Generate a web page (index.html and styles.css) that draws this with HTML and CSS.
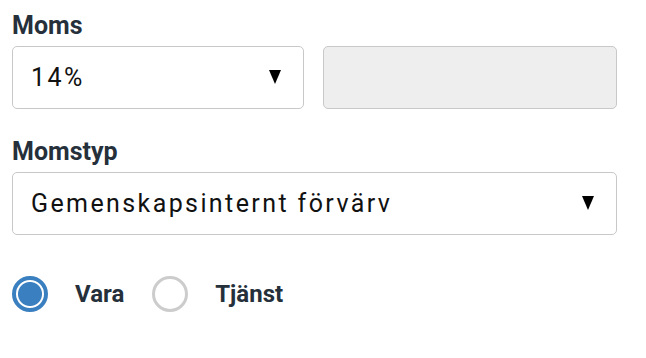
FILE: index.html
```html
<!DOCTYPE html>
<html lang="sv">
<head>
    <meta charset="UTF-8">
    <meta name="viewport" content="width=device-width, initial-scale=1.0">
    <title>Moms</title>
    <link rel="stylesheet" href="styles.css">
</head>
<body>
    <div class="form">
        <div class="field">
            <label class="label" for="moms">Moms</label>
            <div class="row">
                <div class="select">
                    <select id="moms">
                        <option>14%</option>
                        <option>25%</option>
                        <option>12%</option>
                        <option>6%</option>
                        <option>0%</option>
                    </select>
                    <svg class="arrow" width="12" height="14" viewBox="0 0 12 14"><polygon points="0,0 12,0 6,14" fill="#000"/></svg>
                </div>
                <input type="text" class="input" disabled>
            </div>
        </div>
        <div class="field">
            <label class="label" for="momstyp">Momstyp</label>
            <div class="select">
                <select id="momstyp">
                    <option>Gemenskapsinternt förvärv</option>
                </select>
                <svg class="arrow" width="12" height="14" viewBox="0 0 12 14"><polygon points="0,0 12,0 6,14" fill="#000"/></svg>
            </div>
        </div>
        <div class="radios">
            <label class="radio">
                <input type="radio" name="typ" checked>
                <span>Vara</span>
            </label>
            <label class="radio">
                <input type="radio" name="typ">
                <span>Tjänst</span>
            </label>
        </div>
    </div>
</body>
</html>
```

FILE: styles.css
```css
body {
    margin: 0;
    background-color: white;
    font-family: Roboto, Arial, sans-serif;
}
.form {
    width: 605px;
    padding: 12px 0 0 12px;
}
.field {
    margin-bottom: 29px;
}
.label {
    display: block;
    font-size: 25px;
    line-height: 28px;
    font-weight: 700;
    color: #25303b;
    margin-bottom: 6px;
}
.row {
    display: flex;
    gap: 19px;
}
.select {
    position: relative;
    flex: 1;
    min-width: 0;
}
.select select {
    appearance: none;
    -webkit-appearance: none;
    display: block;
    width: 100%;
    height: 63px;
    padding: 0 50px 0 18px;
    border: 1px solid #c8c8c8;
    border-radius: 5px;
    background-color: white;
    font-family: Roboto, Arial, sans-serif;
    font-size: 25px;
    letter-spacing: 2.4px;
    color: #111;
    box-sizing: border-box;
}
.arrow {
    position: absolute;
    right: 23px;
    top: 24px;
    pointer-events: none;
}
.input {
    flex: 1;
    width: 0;
    min-width: 0;
    height: 63px;
    padding: 0;
    border: 1px solid #c8c8c8;
    border-radius: 5px;
    background-color: #eeeeee;
    box-sizing: border-box;
    margin: 0;
}
.radios {
    display: flex;
    align-items: center;
    gap: 28px;
    margin-top: 41px;
}
.radio {
    display: flex;
    align-items: center;
    gap: 27px;
    font-size: 24px;
    font-weight: 700;
    color: #25303b;
}
.radio input {
    appearance: none;
    -webkit-appearance: none;
    width: 36px;
    height: 36px;
    margin: 0;
    border: 3px solid #cccccc;
    border-radius: 50%;
    background: white;
    box-sizing: border-box;
}
.radio input:checked {
    border: 4px solid #3a7fbf;
    background: radial-gradient(circle, #3a7fbf 0 11.5px, white 12.5px);
}
```
